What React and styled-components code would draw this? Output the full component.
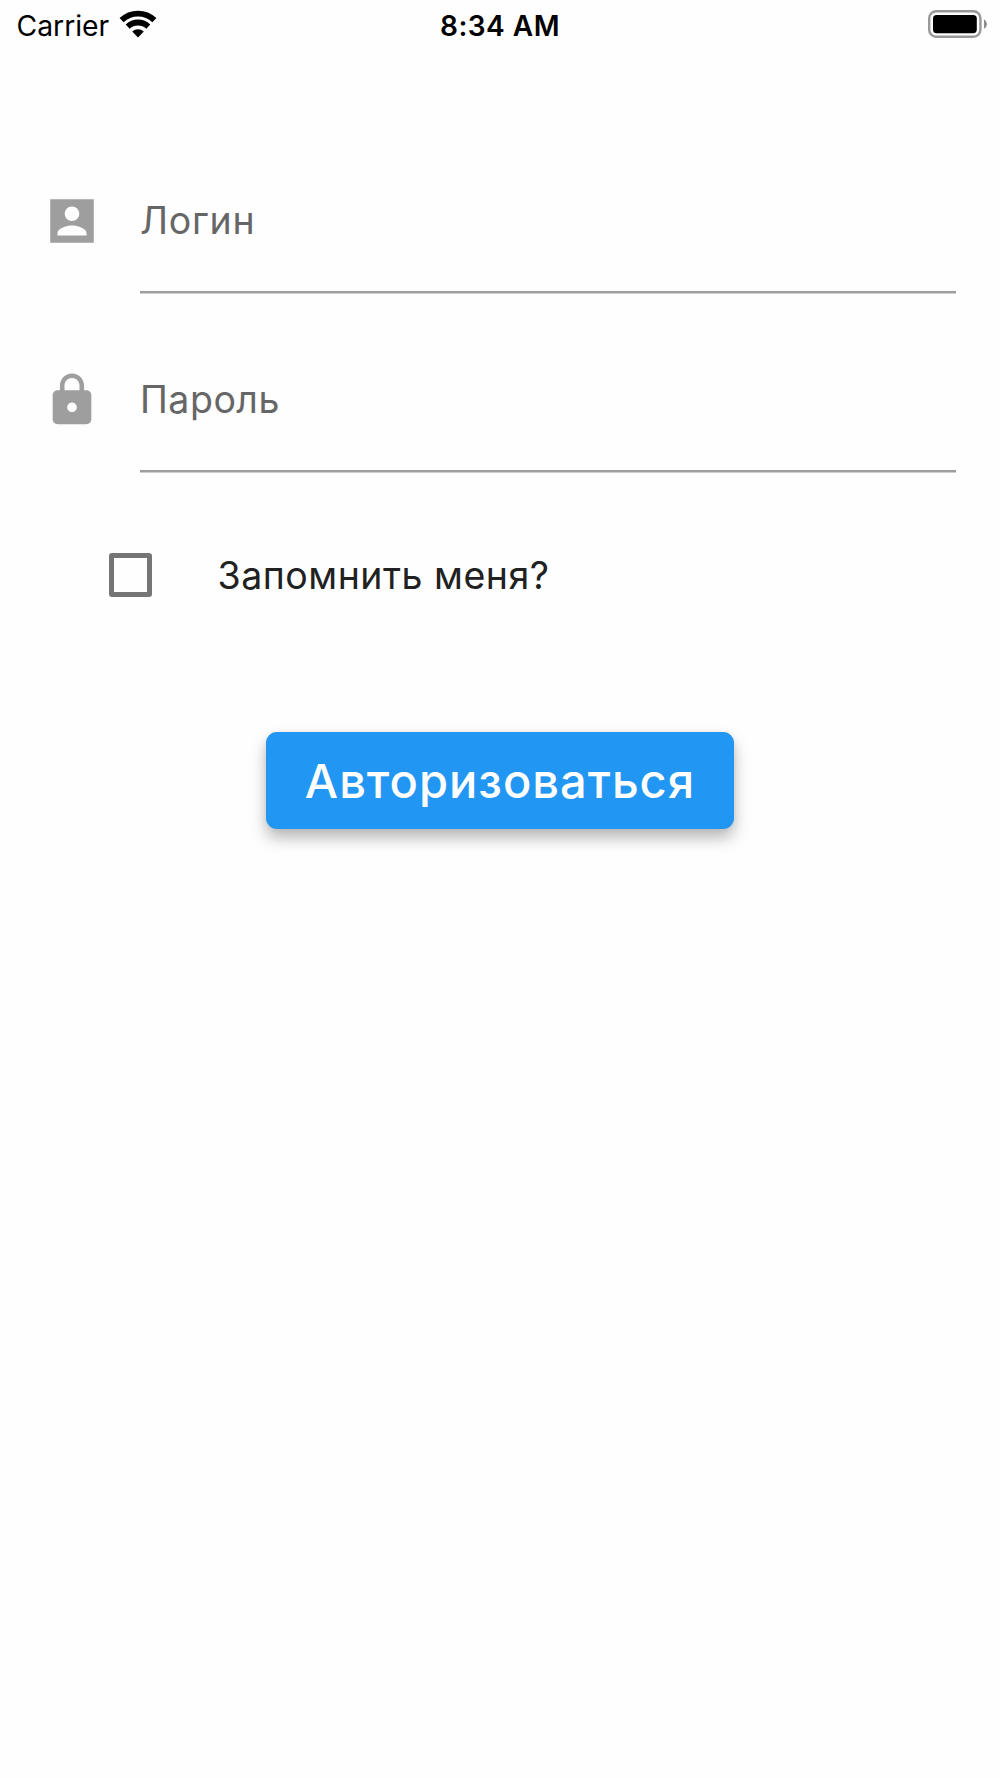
import React from "react"
import styled, { createGlobalStyle } from "styled-components"

const App = () => {
  return (
    <Screen>
      <GlobalStyle />
      <StatusBar>
        <Network>
          <Carrier>Carrier</Carrier>
          <WifiIcon />
        </Network>
        <Clock>8:34 AM</Clock>
        <BatteryIcon />
      </StatusBar>
      <Form>
        <Field>
          <FieldIcon viewBox="0 0 24 24">
            <path
              fillRule="evenodd"
              d="M3 3h18v18H3z M15 9c0-1.66-1.34-3-3-3s-3 1.34-3 3 1.34 3 3 3 3-1.34 3-3z M6 17v1h12v-1c0-2-4-3.1-6-3.1S6 15 6 17z"
            />
          </FieldIcon>
          <FieldBody>
            <FieldLabel $spacing="0.7px">Логин</FieldLabel>
          </FieldBody>
        </Field>
        <Field>
          <FieldIcon viewBox="0 0 24 24">
            <path d="M18 8h-1V6c0-2.76-2.24-5-5-5S7 3.24 7 6v2H6c-1.1 0-2 .9-2 2v10c0 1.1.9 2 2 2h12c1.1 0 2-.9 2-2V10c0-1.1-.9-2-2-2zm-6 9c-1.1 0-2-.9-2-2s.9-2 2-2 2 .9 2 2-.9 2-2 2zm3.1-9H8.9V6c0-1.71 1.39-3.1 3.1-3.1 1.71 0 3.1 1.39 3.1 3.1v2z" />
          </FieldIcon>
          <FieldBody>
            <FieldLabel $spacing="0.5px">Пароль</FieldLabel>
          </FieldBody>
        </Field>
        <Remember>
          <Checkbox />
          <RememberText>Запомнить меня?</RememberText>
        </Remember>
        <SubmitButton>Авторизоваться</SubmitButton>
      </Form>
    </Screen>
  )
}

const WifiIcon = () => (
  <svg width="38" height="28" viewBox="0 0 38 28">
    <path d="M2.6 10.2A23.6 23.6 0 0 1 35.4 10.2" fill="none" stroke="#000" strokeWidth="5.8" />
    <path d="M8.7 16.6A15 15 0 0 1 29.3 16.6" fill="none" stroke="#000" strokeWidth="5.8" />
    <path d="M13.2 21.6A8.5 8.5 0 0 1 24.8 21.6L19 27.4z" />
  </svg>
)

const BatteryIcon = () => (
  <svg width="60" height="28" viewBox="0 0 60 28">
    <rect x="1.2" y="1.2" width="51.2" height="25.6" rx="7" fill="none" stroke="#989898" strokeWidth="2.4" />
    <rect x="5" y="5" width="43.8" height="18.2" rx="3.6" />
    <path d="M56 9.2Q59 11 59 14T56 18.8z" fill="#8c8c8c" />
  </svg>
)

const GlobalStyle = createGlobalStyle`
  body {
    margin: 0;
    background-color: #fefefe;
  }
`

const Screen = styled.div`
  box-sizing: border-box;
  min-height: 1778px;
  background-color: #fefefe;
  font-family: Inter, "Liberation Sans", sans-serif;
  color: #000;
`

const StatusBar = styled.header`
  display: grid;
  grid-template-columns: 1fr auto 1fr;
  align-items: center;
  height: 48px;
  padding: 0 12px;

  > :last-child {
    justify-self: end;
  }
`

const Network = styled.div`
  display: flex;
  align-items: center;
  gap: 10px;
  padding-left: 4.5px;
`

const Carrier = styled.span`
  font-size: 28.3px;
  line-height: 34px;
  padding-top: 4px;
`

const Clock = styled.span`
  font-size: 28px;
  font-weight: 580;
  line-height: 34px;
  letter-spacing: 0.5px;
  padding-top: 4px;
`

const Form = styled.main`
  display: flex;
  flex-direction: column;
  padding: 102px 44px 0 43px;
`

const Field = styled.label`
  display: flex;
  gap: 39px;
  height: 178.6px;
`

const FieldIcon = styled.svg`
  flex: none;
  width: 58px;
  height: 58px;
  margin-top: 42px;
  fill: #9e9e9e;
`

const FieldBody = styled.div`
  box-sizing: border-box;
  flex: 1;
  height: 143.4px;
  padding-top: 47px;
  border-bottom: 2px solid #9e9e9e;
  box-shadow: 0 1px 0 #cfcfcf;
`

const FieldLabel = styled.span`
  display: block;
  font-size: 37.5px;
  line-height: 48px;
  letter-spacing: ${props => props.$spacing};
  color: #666;
`

const Remember = styled.label`
  display: flex;
  align-items: center;
  gap: 65.5px;
  height: 100px;
  margin: 18px 0 0 65.5px;
`

const Checkbox = styled.span`
  box-sizing: border-box;
  width: 43.5px;
  height: 43.5px;
  border: 5px solid #757575;
  border-radius: 3px;
`

const RememberText = styled.span`
  padding-top: 2px;
  font-size: 37.5px;
  line-height: 48px;
  letter-spacing: 0.5px;
  color: #212121;
`

const SubmitButton = styled.button`
  align-self: center;
  width: 468px;
  height: 97px;
  margin: 107px 0 0 1px;
  padding: 0;
  border: 0;
  border-radius: 11px;
  background-color: #2296f3;
  box-shadow: 0 9px 16px rgba(0, 0, 0, 0.28), 0 0 6px rgba(0, 0, 0, 0.05);
  color: #fff;
  font-family: inherit;
  font-size: 47px;
  font-weight: 540;
  letter-spacing: 1px;
`

export default App
